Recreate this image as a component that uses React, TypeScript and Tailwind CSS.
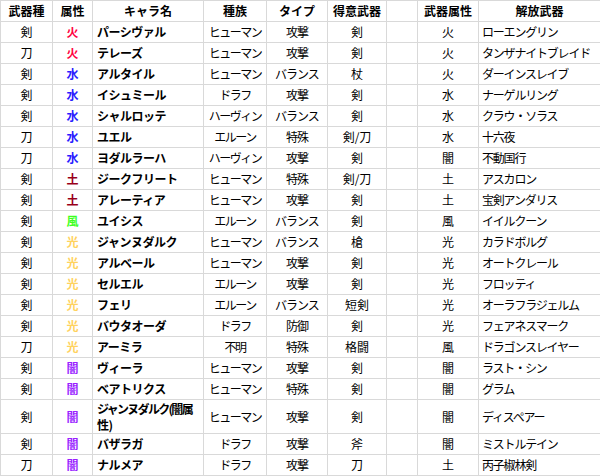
type Row = {
  weapon: string;
  attr: string;
  name: string;
  race: string;
  type: string;
  fav: string;
  wAttr: string;
  release: string;
  tall?: boolean;
};

const attrColor: Record<string, string> = {
  火: 'text-[#ff0040]',
  水: 'text-[#2b1cff]',
  土: 'text-[#99001a]',
  風: 'text-[#3cff1e]',
  光: 'text-[#ffd25e]',
  闇: 'text-[#9a1fff]',
};

const rows: Row[] = [
  { weapon: '剣', attr: '火', name: 'パーシヴァル', race: 'ヒューマン', type: '攻撃', fav: '剣', wAttr: '火', release: 'ローエングリン' },
  { weapon: '刀', attr: '火', name: 'テレーズ', race: 'ヒューマン', type: '攻撃', fav: '剣', wAttr: '火', release: 'タンザナイトブレイド' },
  { weapon: '剣', attr: '水', name: 'アルタイル', race: 'ヒューマン', type: 'バランス', fav: '杖', wAttr: '火', release: 'ダーインスレイブ' },
  { weapon: '剣', attr: '水', name: 'イシュミール', race: 'ドラフ', type: '攻撃', fav: '剣', wAttr: '水', release: 'ナーゲルリング' },
  { weapon: '剣', attr: '水', name: 'シャルロッテ', race: 'ハーヴィン', type: 'バランス', fav: '剣', wAttr: '水', release: 'クラウ・ソラス' },
  { weapon: '刀', attr: '水', name: 'ユエル', race: 'エルーン', type: '特殊', fav: '剣/刀', wAttr: '水', release: '十六夜' },
  { weapon: '刀', attr: '水', name: 'ヨダルラーハ', race: 'ハーヴィン', type: '攻撃', fav: '剣', wAttr: '闇', release: '不動国行' },
  { weapon: '剣', attr: '土', name: 'ジークフリート', race: 'ヒューマン', type: '特殊', fav: '剣/刀', wAttr: '土', release: 'アスカロン' },
  { weapon: '剣', attr: '土', name: 'アレーティア', race: 'ヒューマン', type: '攻撃', fav: '剣', wAttr: '土', release: '宝剣アンダリス' },
  { weapon: '剣', attr: '風', name: 'ユイシス', race: 'エルーン', type: 'バランス', fav: '剣', wAttr: '風', release: 'イイルクーン' },
  { weapon: '剣', attr: '光', name: 'ジャンヌダルク', race: 'ヒューマン', type: 'バランス', fav: '槍', wAttr: '光', release: 'カラドボルグ' },
  { weapon: '剣', attr: '光', name: 'アルベール', race: 'ヒューマン', type: '攻撃', fav: '剣', wAttr: '光', release: 'オートクレール' },
  { weapon: '剣', attr: '光', name: 'セルエル', race: 'エルーン', type: '攻撃', fav: '剣', wAttr: '光', release: 'フロッティ' },
  { weapon: '剣', attr: '光', name: 'フェリ', race: 'エルーン', type: 'バランス', fav: '短剣', wAttr: '光', release: 'オーラフラジェルム' },
  { weapon: '剣', attr: '光', name: 'バウタオーダ', race: 'ドラフ', type: '防御', fav: '剣', wAttr: '光', release: 'フェアネスマーク' },
  { weapon: '刀', attr: '光', name: 'アーミラ', race: '不明', type: '特殊', fav: '格闘', wAttr: '風', release: 'ドラゴンスレイヤー' },
  { weapon: '剣', attr: '闇', name: 'ヴィーラ', race: 'ヒューマン', type: '攻撃', fav: '剣', wAttr: '闇', release: 'ラスト・シン' },
  { weapon: '剣', attr: '闇', name: 'ベアトリクス', race: 'ヒューマン', type: '特殊', fav: '剣', wAttr: '闇', release: 'グラム' },
  { weapon: '剣', attr: '闇', name: 'ジャンヌダルク(闇属性)', race: 'ヒューマン', type: '攻撃', fav: '剣', wAttr: '闇', release: 'ディスペアー', tall: true },
  { weapon: '剣', attr: '闇', name: 'バザラガ', race: 'ドラフ', type: '攻撃', fav: '斧', wAttr: '闇', release: 'ミストルテイン' },
  { weapon: '刀', attr: '闇', name: 'ナルメア', race: 'ドラフ', type: '攻撃', fav: '刀', wAttr: '土', release: '丙子椒林剣' },
];

const cell = 'border border-[#d9d9d9] p-0 align-middle whitespace-nowrap';

export default function App() {
  return (
    <div className="w-[600px] h-[476px] overflow-hidden bg-white font-['Noto_Sans_CJK_JP',sans-serif] text-[12px] leading-[14px] text-black">
      <table className="w-[600px] table-fixed border-collapse">
        <colgroup>
          <col className="w-[52px]" />
          <col className="w-[40px]" />
          <col className="w-[111px]" />
          <col className="w-[63px]" />
          <col className="w-[61px]" />
          <col className="w-[59px]" />
          <col className="w-[31px]" />
          <col className="w-[61px]" />
          <col className="w-[122px]" />
        </colgroup>
        <thead>
          <tr className="h-[21px] font-bold">
            <th className={`${cell} text-center`}>武器種</th>
            <th className={`${cell} text-center`}>属性</th>
            <th className={`${cell} text-center`}>キャラ名</th>
            <th className={`${cell} text-center`}>種族</th>
            <th className={`${cell} text-center`}>タイプ</th>
            <th className={`${cell} text-center`}>得意武器</th>
            <th className={cell}></th>
            <th className={`${cell} text-center`}>武器属性</th>
            <th className={`${cell} text-center`}>解放武器</th>
          </tr>
        </thead>
        <tbody>
          {rows.map((r, i) => (
            <tr key={i} className={r.tall ? 'h-[34px]' : 'h-[21px]'}>
              <td className={`${cell} text-center`}>{r.weapon}</td>
              <td className={`${cell} text-center font-bold ${attrColor[r.attr]}`}>{r.attr}</td>
              <td className={`${cell} pl-[4px] font-bold tracking-[-0.5px]`}>
                {r.tall ? (
                  <div className="flex flex-col leading-[16px]">
                    <span className="tracking-[-1.7px]">ジャンヌダルク(闇属</span>
                    <span>性)</span>
                  </div>
                ) : (
                  r.name
                )}
              </td>
              <td className={`${cell} text-center tracking-[-1.5px]`}>{r.race}</td>
              <td className={`${cell} text-center tracking-[-1px]`}>{r.type}</td>
              <td className={`${cell} text-center`}>{r.fav}</td>
              <td className={cell}></td>
              <td className={`${cell} text-center`}>{r.wAttr}</td>
              <td className={`${cell} pl-[3px] tracking-[-1.2px]`}>{r.release}</td>
            </tr>
          ))}
        </tbody>
      </table>
    </div>
  );
}
